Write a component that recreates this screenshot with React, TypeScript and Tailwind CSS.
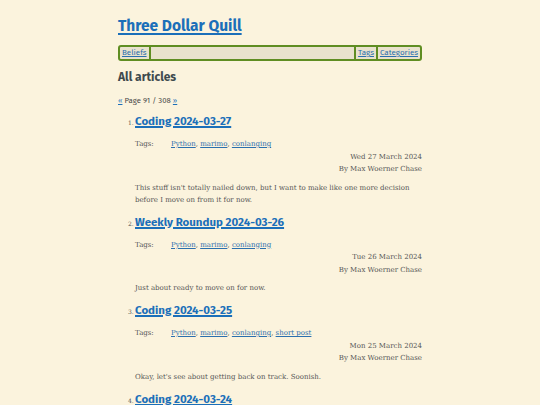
const posts = [
    {
        n: 1,
        title: 'Coding 2024-03-27',
        tags: ['Python', 'marimo', 'conlanging'],
        date: 'Wed 27 March 2024',
        summary:
            "This stuff isn't totally nailed down, but I want to make like one more decision before I move on from it for now.",
    },
    {
        n: 2,
        title: 'Weekly Roundup 2024-03-26',
        tags: ['Python', 'marimo', 'conlanging'],
        date: 'Tue 26 March 2024',
        summary: 'Just about ready to move on for now.',
    },
    {
        n: 3,
        title: 'Coding 2024-03-25',
        tags: ['Python', 'marimo', 'conlanging', 'short post'],
        date: 'Mon 25 March 2024',
        summary: "Okay, let's see about getting back on track. Soonish.",
    },
    {
        n: 4,
        title: 'Coding 2024-03-24',
        tags: ['Python', 'marimo', 'conlanging'],
        date: 'Sun 24 March 2024',
        summary: 'More of the same.',
    },
];

const sans = "font-['Fira_Sans','Lato','Open_Sans',sans-serif]";
const serif = "font-['Roboto_Slab','DejaVu_Serif',serif]";

export default function App() {
    return (
        <div className="min-h-screen bg-[#fbf3dd] text-[#4a4a4a]">
            <div className="mx-auto w-[304px] pt-[15px]">
                <h1 className={`${sans} text-[15.5px] font-bold leading-[22px]`}>
                    <a href="#" className="text-[#1b6fb9] underline decoration-2 underline-offset-[1.5px]">
                        Three Dollar Quill
                    </a>
                </h1>
                <nav
                    className={`${sans} mt-[8px] flex h-[16px] items-stretch rounded-[3px] border-2 border-[#5f8d22] bg-[#e9e2cd] text-[8px] leading-[12px]`}
                >
                    <a href="#" className="px-[2px] text-[#2b6fae] underline">
                        Beliefs
                    </a>
                    <span className="w-[2px] bg-[#5f8d22]" />
                    <span className="flex-1" />
                    <span className="w-[2px] bg-[#5f8d22]" />
                    <a href="#" className="px-[2px] text-[#2b6fae] underline">
                        Tags
                    </a>
                    <span className="w-[2px] bg-[#5f8d22]" />
                    <a href="#" className="px-[2px] text-[#2b6fae] underline">
                        Categories
                    </a>
                </nav>
                <h2 className={`${sans} mt-[7px] text-[12px] font-bold leading-[18px] text-[#3e4a4e]`}>
                    All articles
                </h2>
                <p className={`${sans} mt-[10px] text-[7.75px] leading-[10px] text-[#4a4a4a]`}>
                    <a href="#" className="text-[#1b6fb9] underline">«</a> Page 91 / 308{' '}
                    <a href="#" className="text-[#1b6fb9] underline">»</a>
                </p>
                <ol className="mt-[5px] pl-[17px]">
                    {posts.map((p) => (
                        <li key={p.n} className="mb-[6px]">
                            <div className="flex items-baseline">
                                <span className={`${serif} -ml-[7px] w-[7px] text-[6px] text-[#555]`}>
                                    {p.n}.
                                </span>
                                <a
                                    href="#"
                                    className={`${sans} text-[11.5px] font-bold leading-[20px] text-[#1b6fb9] underline decoration-[1.5px] underline-offset-1`}
                                >
                                    {p.title}
                                </a>
                            </div>
                            <div className={`${serif} text-[7px] leading-[12.5px] text-[#555]`}>
                                <div className="mt-[7px] flex">
                                    <span className="w-[36px]">Tags:</span>
                                    <span>
                                        {p.tags.map((t, i) => (
                                            <span key={t}>
                                                <a href="#" className="text-[#2b6fae] underline">
                                                    {t}
                                                </a>
                                                {i < p.tags.length - 1 ? ', ' : ''}
                                            </span>
                                        ))}
                                    </span>
                                </div>
                                <div className="text-right">{p.date}</div>
                                <div className="text-right">By Max Woerner Chase</div>
                                <p className="mt-[6px] leading-[12px]">{p.summary}</p>
                            </div>
                        </li>
                    ))}
                </ol>
            </div>
        </div>
    );
}
